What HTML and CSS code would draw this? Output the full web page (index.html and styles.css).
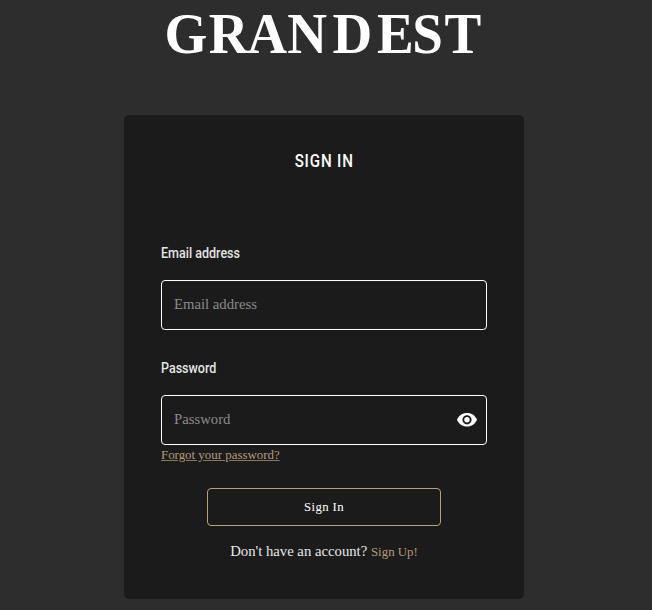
FILE: index.html
```html
<!DOCTYPE html>
<html lang="en">
<head>
<meta charset="utf-8">
<title>Grandest – Sign In</title>
<link rel="stylesheet" href="styles.css">
</head>
<body>
<header class="brand">
  <svg class="logo" width="326" height="72" viewBox="0 0 326 72" role="img" aria-label="Grandest">
    <text class="logo-text" transform="scale(.95 1)" y="53" x="1.600 48.200 88.800 130.800 178.300 225.300 262.500 296.300">GRANDEST</text>
  </svg>
</header>
<main class="card">
  <h1 class="title"><span class="title-text">SIGN IN</span></h1>
  <form class="form">
    <label class="label" for="email">Email address</label>
    <input class="input" id="email" type="email" placeholder="Email address">
    <label class="label" for="password">Password</label>
    <div class="password">
      <input class="input" id="password" type="password" placeholder="Password">
      <svg class="eye" viewBox="0 0 22 16" aria-hidden="true">
        <path fill="#fff" fill-rule="evenodd" d="M11 1C6.400 1 2.700 3.700 1 7.800c1.700 4.100 5.400 6.800 10 6.800s8.300-2.700 10-6.800C19.300 3.700 15.600 1 11 1Zm0 11.400a4.600 4.600 0 1 1 0-9.200 4.600 4.600 0 0 1 0 9.200Zm0-1.900a2.700 2.700 0 1 0 0-5.400 2.700 2.700 0 0 0 0 5.400Z"/>
      </svg>
    </div>
    <a class="forgot" href="#">Forgot your password?</a>
    <button class="submit" type="button">Sign In</button>
    <p class="signup">Don't have an account? <a class="signup-link" href="#">Sign Up!</a></p>
  </form>
</main>
</body>
</html>
```
FILE: styles.css
```css
* { box-sizing: border-box; }
html { overflow: hidden; }
body {
  margin: 0;
  background: #2d2d2d;
  color: #fff;
  font-family: "Liberation Serif", serif;
}
.brand {
  display: flex;
  height: 115px;
  padding-left: 163px;
}
.logo { display: block; }
.logo-text {
  font-family: "Liberation Serif", serif;
  font-size: 58px;
  font-weight: bold;
  fill: #fff;
}
.card {
  width: 400px;
  height: 484px;
  margin-left: 124px;
  padding: 35px 37px 0;
  border-radius: 5px;
  background: #1b1b1b;
}
.title {
  margin: 0 0 73px;
  font: 500 18px/22px Roboto, sans-serif;
  letter-spacing: 1px;
  text-align: center;
}
.title-text {
  display: inline-block;
  transform: scaleX(.84);
}
.form {
  display: flex;
  flex-direction: column;
}
.label {
  align-self: flex-start;
  height: 35px;
  color: #e5e5e5;
  font: 500 15px/16px Roboto, sans-serif;
  transform: scaleX(.835);
  transform-origin: left;
}
.input {
  display: block;
  width: 100%;
  height: 50px;
  margin: 0 0 30px;
  padding: 0 12px 2px;
  border: 1px solid #fff;
  border-radius: 4px;
  background: transparent;
  color: #fff;
  font: 14.72px "Liberation Serif", serif;
}
.input::placeholder { color: #8b8b8b; }
.password { position: relative; }
.password .input { margin: 0; }
.eye {
  position: absolute;
  top: 17px;
  right: 9px;
  width: 22px;
  height: 16px;
}
.forgot {
  align-self: flex-start;
  margin-top: 2px;
  color: #b59a78;
  font-size: 12.9px;
  line-height: 16px;
  text-decoration-color: #8a765d;
}
.submit {
  align-self: center;
  width: 234px;
  height: 38px;
  margin-top: 25px;
  padding: 0;
  border: 1px solid #bb9f78;
  border-radius: 4px;
  background: transparent;
  color: #fff;
  font: 12.8px "Liberation Serif", serif;
  letter-spacing: .35px;
}
.signup {
  margin: 16px 0 0;
  color: #e8e8e8;
  font-size: 14.72px;
  line-height: 18px;
  text-align: center;
}
.signup-link {
  color: #b59a78;
  font-size: 12.9px;
  text-decoration: none;
}
```
